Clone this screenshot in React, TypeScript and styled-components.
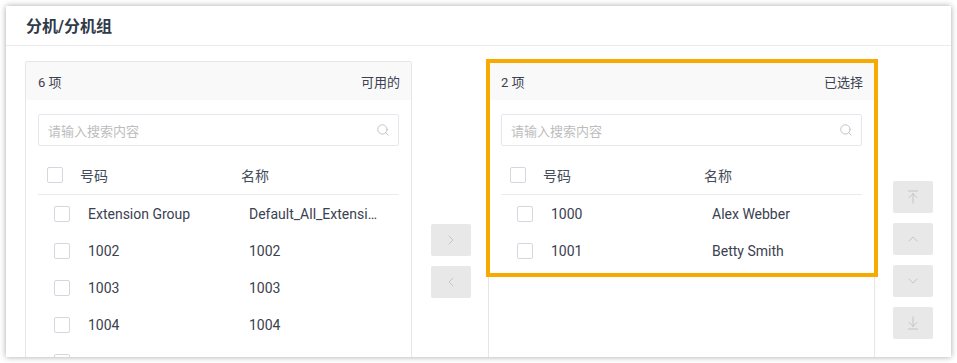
import React from "react";
import styled, { createGlobalStyle } from "styled-components";
import {
  ChevronRight,
  ChevronLeft,
  ChevronUp,
  ChevronDown,
  ArrowUpToLine,
  ArrowDownToLine,
  Search,
} from "lucide-react";

const Global = createGlobalStyle`
  html, body { margin: 0; padding: 0; background: #ffffff; }
  body { font-family: Roboto, "Noto Sans CJK SC", sans-serif; color: #3a4150; }
  * { box-sizing: border-box; }
`;

const Page = styled.div`
  padding: 6px;
`;

const Card = styled.div`
  position: relative;
  width: 945px;
  height: 351px;
  background: #fff;
  overflow: hidden;
  box-shadow: 0 0 6px rgba(0, 0, 0, 0.35);
`;

const CardHeader = styled.div`
  height: 40px;
  display: flex;
  align-items: center;
  padding-left: 20px;
  padding-bottom: 2px;
  border-bottom: 1px solid #ececef;
  font-size: 16px;
  font-weight: 700;
  color: #2f3a4a;
`;

const Body = styled.div`
  display: flex;
  align-items: flex-start;
  padding: 15px 0 0 19px;
`;

const Panel = styled.div`
  width: 387px;
  height: 320px;
  border: 1px solid #e6e6ea;
  border-radius: 2px;
  overflow: hidden;
  flex-shrink: 0;
`;

const PanelHeader = styled.div`
  height: 38px;
  background: #f9f9f9;
  display: flex;
  align-items: center;
  justify-content: space-between;
  padding: 0 11px 0 12px;
  font-size: 13px;
  color: #3a4150;
`;

const PanelBody = styled.div`
  padding: 14px 12px 0 12px;
`;

const SearchBox = styled.div`
  height: 32px;
  border: 1px solid #e6e6ee;
  border-radius: 2px;
  display: flex;
  align-items: center;
  justify-content: space-between;
  padding: 0 8px 0 9px;
  font-size: 13px;
  color: #bdbdbd;
`;

const TableHead = styled.div`
  margin-top: 10px;
  height: 39px;
  border-bottom: 1px solid #ebebee;
  display: grid;
  grid-template-columns: 33px 161px 1fr;
  align-items: center;
  padding-left: 9px;
  font-size: 14px;
  color: #444c5a;
`;

const Row = styled.div`
  height: 37px;
  display: grid;
  grid-template-columns: 34px 161px 1fr;
  align-items: center;
  padding-left: 16px;
  padding-right: 19px;
  font-size: 14px;
  color: #3a4150;
`;

const Cell = styled.span`
  white-space: nowrap;
  overflow: hidden;
  text-overflow: ellipsis;
`;

const Check = styled.span`
  display: block;
  width: 16px;
  height: 16px;
  border: 1px solid #d6d6e0;
  border-radius: 2px;
  background: #fff;
`;

const ButtonColumn = styled.div<{ $top: number; $left: number; $right: number }>`
  display: flex;
  flex-direction: column;
  gap: 10px;
  padding-top: ${(p) => p.$top}px;
  margin: 0 ${(p) => p.$right}px 0 ${(p) => p.$left}px;
`;

const IconButton = styled.div`
  width: 40px;
  height: 32px;
  border-radius: 2px;
  background: #e8e8e8;
  display: flex;
  align-items: center;
  justify-content: center;
  color: #bcbcbc;
`;

const Highlight = styled.div`
  position: absolute;
  left: 480px;
  top: 53px;
  width: 392px;
  height: 218px;
  border: 4px solid #f8aa00;
  pointer-events: none;
`;

type Item = { num: string; name: string };

const available: Item[] = [
  { num: "Extension Group", name: "Default_All_Extension_Group" },
  { num: "1002", name: "1002" },
  { num: "1003", name: "1003" },
  { num: "1004", name: "1004" },
  { num: "", name: "" },
];

const selected: Item[] = [
  { num: "1000", name: "Alex Webber" },
  { num: "1001", name: "Betty Smith" },
];

function TransferPanel({ count, label, items }: { count: number; label: string; items: Item[] }) {
  return (
    <Panel>
      <PanelHeader>
        <span>{count} 项</span>
        <span>{label}</span>
      </PanelHeader>
      <PanelBody>
        <SearchBox>
          <span>请输入搜索内容</span>
          <Search size={14} strokeWidth={1.4} color="#b8b8b8" />
        </SearchBox>
        <TableHead>
          <Check />
          <span>号码</span>
          <span>名称</span>
        </TableHead>
        {items.map((it, i) => (
          <Row key={i}>
            <Check />
            <Cell>{it.num}</Cell>
            <Cell>{it.name}</Cell>
          </Row>
        ))}
      </PanelBody>
    </Panel>
  );
}

export default function App() {
  return (
    <Page>
      <Global />
      <Card>
        <CardHeader>分机/分机组</CardHeader>
        <Body>
          <TransferPanel count={6} label="可用的" items={available} />
          <ButtonColumn $top={163} $left={19} $right={17}>
            <IconButton>
              <ChevronRight size={16} strokeWidth={1.2} />
            </IconButton>
            <IconButton>
              <ChevronLeft size={16} strokeWidth={1.2} />
            </IconButton>
          </ButtonColumn>
          <TransferPanel count={2} label="已选择" items={selected} />
          <ButtonColumn $top={120} $left={18} $right={18}>
            <IconButton>
              <ArrowUpToLine size={16} strokeWidth={1.2} />
            </IconButton>
            <IconButton>
              <ChevronUp size={16} strokeWidth={1.2} />
            </IconButton>
            <IconButton>
              <ChevronDown size={16} strokeWidth={1.2} />
            </IconButton>
            <IconButton>
              <ArrowDownToLine size={16} strokeWidth={1.2} />
            </IconButton>
          </ButtonColumn>
        </Body>
        <Highlight />
      </Card>
    </Page>
  );
}
